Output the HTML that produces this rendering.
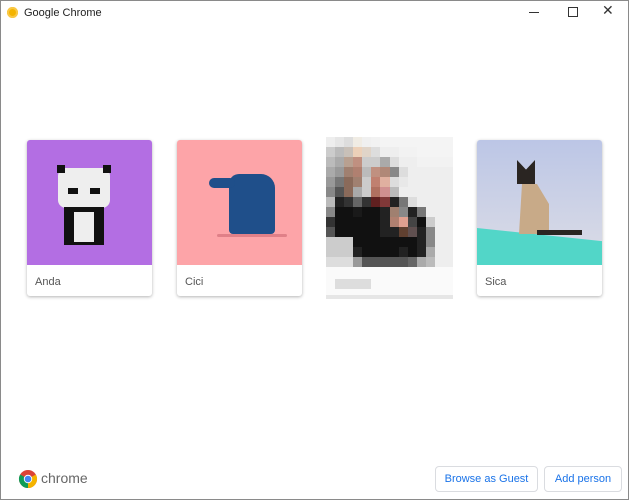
<!DOCTYPE html><html><head><style>
body{margin:0;width:629px;height:500px;overflow:hidden;background:#fff;font-family:"Liberation Sans",sans-serif;position:relative}
.win{position:absolute;left:0;top:0;width:627px;height:498px;border:1px solid #8a8a8a}
.t{position:absolute;left:24px;top:7px;font-size:11px;color:#222}
.card{position:absolute;top:140px;width:125px;height:156px;border-radius:3px;box-shadow:0 1px 3px rgba(0,0,0,.3);background:#fff;overflow:hidden}
.img{height:125px;position:relative;overflow:hidden}
.lab{position:absolute;left:8px;top:136px;font-size:11px;color:#555}
.btn{position:absolute;top:466px;height:24px;border:1px solid #dadce0;border-radius:4px;color:#1a73e8;font-size:11px;text-align:center;line-height:24px}
.px{position:absolute;left:326px;top:137px;width:127px;height:162px;background:#fafafa}
.r{display:flex;height:10px}.r i{flex:1}
</style></head><body><div class="win"></div>
<div style="position:absolute;left:7px;top:7px;width:11px;height:11px;border-radius:50%;background:#f4b400;box-shadow:inset 0 0 0 2px #f9c846"></div>
<div class="t">Google Chrome</div>
<div style="position:absolute;left:529px;top:12px;width:10px;height:1px;background:#333"></div>
<div style="position:absolute;left:568px;top:7px;width:8px;height:8px;border:1px solid #333"></div>
<div style="position:absolute;left:602px;top:2px;font-size:14px;color:#333">✕</div>

<div class="card" style="left:27px"><div class="img" style="background:#b36ee3">
<div style="position:absolute;left:31px;top:28px;width:52px;height:40px;background:#eee;border-radius:8px"></div>
<div style="position:absolute;left:30px;top:25px;width:8px;height:8px;background:#111"></div>
<div style="position:absolute;left:76px;top:25px;width:8px;height:8px;background:#111"></div>
<div style="position:absolute;left:41px;top:48px;width:10px;height:6px;background:#111"></div>
<div style="position:absolute;left:63px;top:48px;width:10px;height:6px;background:#111"></div>
<div style="position:absolute;left:37px;top:67px;width:40px;height:38px;background:#111"></div>
<div style="position:absolute;left:47px;top:72px;width:20px;height:30px;background:#eee"></div>
</div><div class="lab">Anda</div></div>

<div class="card" style="left:177px"><div class="img" style="background:#fda4a8">
<div style="position:absolute;left:52px;top:34px;width:46px;height:60px;background:#1f4f8a;border-radius:10px 14px 4px 4px"></div>
<div style="position:absolute;left:32px;top:38px;width:26px;height:10px;background:#1f4f8a;border-radius:5px"></div>
<div style="position:absolute;left:40px;top:94px;width:70px;height:3px;background:#e08088;border-radius:2px"></div>
</div><div class="lab">Cici</div></div>

<div class="px">
<div class="r"><i style="background:#eee"></i><i style="background:#e6e6e6"></i><i style="background:#ddd"></i><i style="background:#f0ece4"></i><i style="background:#f0f0f0"></i><i style="background:#f2f2f2"></i><i style="background:#f4f4f4"></i><i style="background:#f4f4f4"></i><i style="background:#f4f4f4"></i><i style="background:#f4f4f4"></i><i style="background:#f4f4f4"></i><i style="background:#f4f4f4"></i><i style="background:#f4f4f4"></i><i style="background:#f4f4f4"></i></div>
<div class="r"><i style="background:#ccc"></i><i style="background:#bbb"></i><i style="background:#c8c0b8"></i><i style="background:#ecd0b8"></i><i style="background:#e0d4c8"></i><i style="background:#ddd"></i><i style="background:#eee"></i><i style="background:#eee"></i><i style="background:#f2f2f2"></i><i style="background:#f2f2f2"></i><i style="background:#f4f4f4"></i><i style="background:#f4f4f4"></i><i style="background:#f4f4f4"></i><i style="background:#f4f4f4"></i></div>
<div class="r"><i style="background:#bbb"></i><i style="background:#aaa"></i><i style="background:#b8a090"></i><i style="background:#c09080"></i><i style="background:#ccc"></i><i style="background:#ccc"></i><i style="background:#aaa"></i><i style="background:#ddd"></i><i style="background:#eee"></i><i style="background:#eee"></i><i style="background:#f2f2f2"></i><i style="background:#f2f2f2"></i><i style="background:#f2f2f2"></i><i style="background:#f2f2f2"></i></div>
<div class="r"><i style="background:#aaa"></i><i style="background:#999"></i><i style="background:#a08070"></i><i style="background:#b08070"></i><i style="background:#bbb"></i><i style="background:#c09080"></i><i style="background:#b08878"></i><i style="background:#888"></i><i style="background:#ddd"></i><i style="background:#eee"></i><i style="background:#eee"></i><i style="background:#eee"></i><i style="background:#eee"></i><i style="background:#eee"></i></div>
<div class="r"><i style="background:#999"></i><i style="background:#777"></i><i style="background:#8a6a5a"></i><i style="background:#a08070"></i><i style="background:#ccc"></i><i style="background:#c08070"></i><i style="background:#e0b0a0"></i><i style="background:#ddd"></i><i style="background:#e8e8e8"></i><i style="background:#eee"></i><i style="background:#eee"></i><i style="background:#eee"></i><i style="background:#eee"></i><i style="background:#eee"></i></div>
<div class="r"><i style="background:#888"></i><i style="background:#555"></i><i style="background:#8a6a5a"></i><i style="background:#aaa"></i><i style="background:#ccc"></i><i style="background:#b07060"></i><i style="background:#d09090"></i><i style="background:#bbb"></i><i style="background:#eee"></i><i style="background:#eee"></i><i style="background:#eee"></i><i style="background:#eee"></i><i style="background:#eee"></i><i style="background:#eee"></i></div>
<div class="r"><i style="background:#bbb"></i><i style="background:#222"></i><i style="background:#333"></i><i style="background:#666"></i><i style="background:#333"></i><i style="background:#602020"></i><i style="background:#803838"></i><i style="background:#222"></i><i style="background:#777"></i><i style="background:#ddd"></i><i style="background:#eee"></i><i style="background:#eee"></i><i style="background:#eee"></i><i style="background:#eee"></i></div>
<div class="r"><i style="background:#888"></i><i style="background:#111"></i><i style="background:#111"></i><i style="background:#1a1a1a"></i><i style="background:#111"></i><i style="background:#111"></i><i style="background:#222"></i><i style="background:#a08070"></i><i style="background:#888"></i><i style="background:#222"></i><i style="background:#777"></i><i style="background:#eee"></i><i style="background:#eee"></i><i style="background:#eee"></i></div>
<div class="r"><i style="background:#333"></i><i style="background:#111"></i><i style="background:#111"></i><i style="background:#111"></i><i style="background:#111"></i><i style="background:#111"></i><i style="background:#222"></i><i style="background:#b08070"></i><i style="background:#e0a090"></i><i style="background:#444"></i><i style="background:#111"></i><i style="background:#ccc"></i><i style="background:#eee"></i><i style="background:#eee"></i></div>
<div class="r"><i style="background:#555"></i><i style="background:#111"></i><i style="background:#111"></i><i style="background:#111"></i><i style="background:#111"></i><i style="background:#111"></i><i style="background:#222"></i><i style="background:#222"></i><i style="background:#604030"></i><i style="background:#605050"></i><i style="background:#222"></i><i style="background:#888"></i><i style="background:#eee"></i><i style="background:#eee"></i></div>
<div class="r"><i style="background:#ccc"></i><i style="background:#ccc"></i><i style="background:#ccc"></i><i style="background:#111"></i><i style="background:#111"></i><i style="background:#111"></i><i style="background:#111"></i><i style="background:#111"></i><i style="background:#111"></i><i style="background:#111"></i><i style="background:#222"></i><i style="background:#888"></i><i style="background:#eee"></i><i style="background:#eee"></i></div>
<div class="r"><i style="background:#ccc"></i><i style="background:#ccc"></i><i style="background:#ccc"></i><i style="background:#222"></i><i style="background:#111"></i><i style="background:#111"></i><i style="background:#111"></i><i style="background:#111"></i><i style="background:#222"></i><i style="background:#111"></i><i style="background:#222"></i><i style="background:#aaa"></i><i style="background:#eee"></i><i style="background:#eee"></i></div>
<div class="r"><i style="background:#ddd"></i><i style="background:#ddd"></i><i style="background:#ddd"></i><i style="background:#999"></i><i style="background:#555"></i><i style="background:#555"></i><i style="background:#555"></i><i style="background:#555"></i><i style="background:#555"></i><i style="background:#666"></i><i style="background:#aaa"></i><i style="background:#bbb"></i><i style="background:#eee"></i><i style="background:#eee"></i></div>
<div style="position:absolute;left:9px;top:142px;width:36px;height:10px;background:#ddd"></div>
<div style="position:absolute;left:0;top:158px;width:127px;height:4px;background:#e6e6e6"></div>
</div>

<div class="card" style="left:477px"><div class="img" style="background:linear-gradient(#bcc6e6,#dcdde6)">
<div style="position:absolute;left:0;top:88px;width:140px;height:60px;background:#52d6c8;transform:skewY(6deg);transform-origin:0 0"></div>
<div style="position:absolute;left:40px;top:20px;width:18px;height:24px;background:#2a2522;clip-path:polygon(0 0,50% 40%,100% 0,100% 100%,0 100%)"></div>
<div style="position:absolute;left:42px;top:44px;width:30px;height:50px;background:#c8aa88;clip-path:polygon(10% 0,60% 0,100% 40%,100% 100%,0 100%)"></div>
<div style="position:absolute;left:60px;top:90px;width:45px;height:5px;background:#2a2522"></div>
</div><div class="lab">Sica</div></div>

<svg style="position:absolute;left:18px;top:469px" width="20" height="20" viewBox="0 0 20 20"><circle cx="10" cy="10" r="9" fill="#db4437"/><path d="M10 10 L2.2 5.5 A9 9 0 0 0 10 19Z" fill="#0f9d58"/><path d="M10 10 L10 19 A9 9 0 0 0 17.8 5.5Z" fill="#f4b400"/><circle cx="10" cy="10" r="4.2" fill="#fff"/><circle cx="10" cy="10" r="3.3" fill="#4285f4"/></svg>
<div style="position:absolute;left:41px;top:470px;font-size:14px;color:#666">chrome</div>
<div class="btn" style="left:435px;width:101px">Browse as Guest</div>
<div class="btn" style="left:544px;width:76px">Add person</div>
</body></html>
